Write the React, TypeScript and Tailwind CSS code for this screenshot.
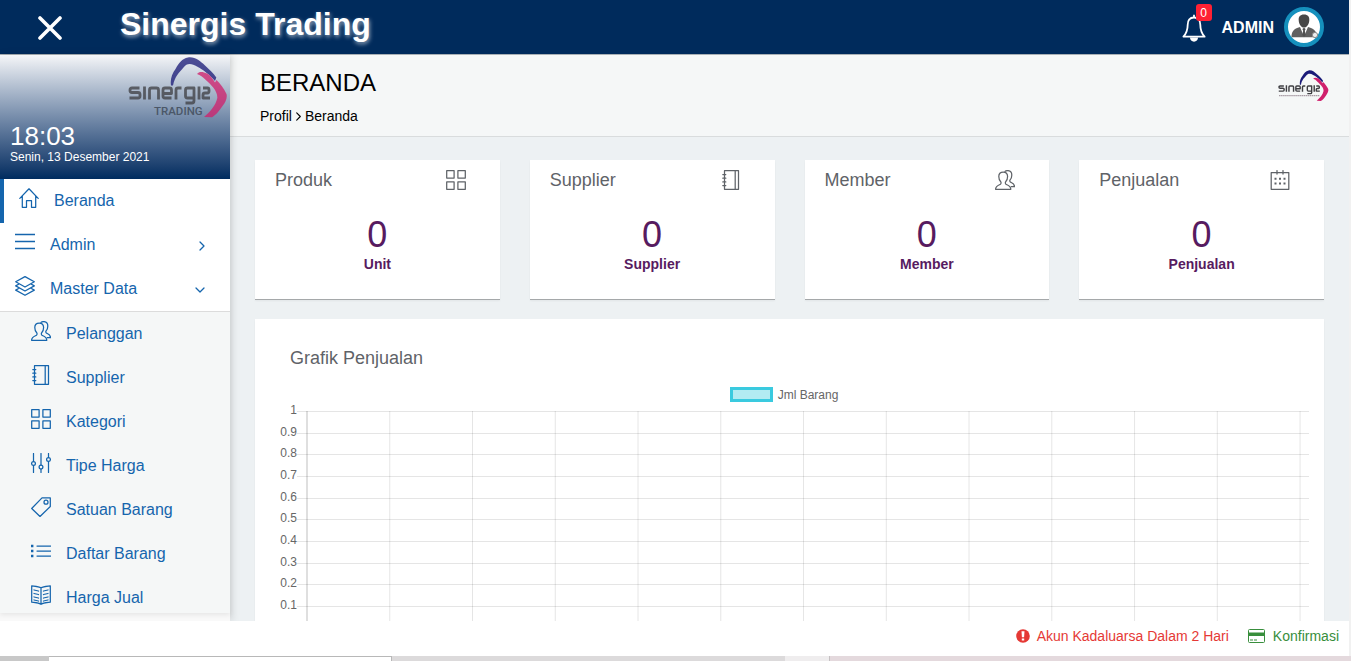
import React from "react";

type IconProps = { className?: string };

const stroke = {
  fill: "none",
  stroke: "currentColor",
  strokeWidth: 1.25,
  strokeLinejoin: "round" as const,
  strokeLinecap: "round" as const,
  viewBox: "0 0 20 20",
  "aria-hidden": true,
};

const HomeIcon = ({ className }: IconProps) => (
  <svg {...stroke} className={className}>
    <path d="M.8 10.4 10 .8l9.200 9.600M3.300 8v11.300h4.200v-6.600h5v6.600h4.200V8" />
  </svg>
);
const MenuIcon = ({ className }: IconProps) => (
  <svg {...stroke} className={className} strokeWidth={1.6}>
    <path d="M.5 2.500h19M.5 9.500h19M.5 16.500h19" />
  </svg>
);
const LayersIcon = ({ className }: IconProps) => (
  <svg {...stroke} className={className}>
    <path d="M10 .6 19.300 5.800 10 11 .7 5.800zM4 8 .7 9.900 10 15l9.300-5.100L16 8M4 12.200.7 14.100l9.300 5.200 9.300-5.200-3.300-1.900" />
  </svg>
);
const PeopleIcon = ({ className }: IconProps) => (
  <svg {...stroke} className={className}>
    <path d="M8.200 2c3 0 4.400 1.900 4.400 4.500 0 2.300-.7 4-1.900 5.200-.5.600-.5 2 .3 2.600 1 .7 4.800 1.400 4.800 5H.6c0-3.600 3.800-4.300 4.800-5 .8-.6.800-2 .3-2.600-1.200-1.200-1.900-2.900-1.900-5.200C3.800 3.900 5.200 2 8.200 2z" />
    <path d="M10 1.400C10.700.8 11.600.6 12.600.6c3 0 4.200 1.900 4.200 4.300 0 2.100-.6 3.700-1.700 4.900-.5.600-.4 1.800.4 2.300 1 .7 4 1.300 4 4.600h-3.300" />
  </svg>
);
const NotebookIcon = ({ className }: IconProps) => (
  <svg {...stroke} className={className}>
    <path d="M3.500.7h14v18.600h-14zM14.200.7v18.600M1.800 4.500h3M1.800 8.200h3M1.800 11.900h3M1.800 15.500h3" />
  </svg>
);
const GridIcon = ({ className }: IconProps) => (
  <svg {...stroke} className={className}>
    <path d="M.7.700h7.400v7.400H.7zM11.900.7h7.400v7.400h-7.400zM.7 11.900h7.400v7.400H.7zM11.900 11.900h7.400v7.400h-7.400z" />
  </svg>
);
const SlidersIcon = ({ className }: IconProps) => (
  <svg {...stroke} className={className}>
    <path d="M2.500.5v8M2.500 12.500v7M10 .5v11.700M10 16v3.500M17.500.5v4M17.500 8.500v11" />
    <circle cx="2.500" cy="10.500" r="1.900" />
    <circle cx="10" cy="14.100" r="1.900" />
    <circle cx="17.500" cy="6.500" r="1.900" />
  </svg>
);
const TagIcon = ({ className }: IconProps) => (
  <svg {...stroke} className={className}>
    <path d="M11 .9h8.300v8.600L9 19.500.7 11.500z" />
    <circle cx="15" cy="5.200" r="2" />
  </svg>
);
const ListIcon = ({ className }: IconProps) => (
  <svg {...stroke} className={className}>
    <path d="M6 5h13.500M6 10h13.500M6 15h13.500" />
    <path fill="currentColor" stroke="none" d="M0 3.800h2.400v2.400H0zM0 8.800h2.400v2.400H0zM0 13.800h2.400v2.400H0z" />
  </svg>
);
const BookIcon = ({ className }: IconProps) => (
  <svg {...stroke} className={className}>
    <path d="M10 2.800C7.500 1.200 3.800 1.200.7.800v16.400c3.100.4 6.800.4 9.300 2.100 2.500-1.700 6.200-1.700 9.300-2.100V.8c-3.100.4-6.800.4-9.300 2zM10 2.800v16.500M3 5l4.500 1M3 8.500l4.500 1M3 12l4.500 1M3 15l4.500 1M17 5l-4.500 1M17 8.500l-4.500 1M17 12l-4.500 1M17 15l-4.500 1" />
  </svg>
);
const CalendarIcon = ({ className }: IconProps) => (
  <svg {...stroke} className={className}>
    <path d="M1.200 2.600h17.600v16.700H1.200zM7 .6v3.400M13 .6v3.400" />
    <path fill="currentColor" stroke="none" d="M4.500 7.800h2v2h-2zM9 7.800h2v2H9zM13.500 7.800h2v2h-2zM4.500 12.500h2v2h-2zM9 12.500h2v2H9zM13.500 12.500h2v2h-2z" />
  </svg>
);
const Chevron = ({ className }: IconProps) => (
  <svg {...stroke} viewBox="0 0 10 10" className={className}>
    <path d="m3 1 4 4-4 4" />
  </svg>
);
const BellIcon = ({ className }: IconProps) => (
  <svg viewBox="0 0 24 28" fill="none" stroke="currentColor" strokeWidth="1.800" strokeLinejoin="round" className={className} aria-hidden="true">
    <path d="M12 3.500c-4.500 0-6.300 3.200-6.300 7.200 0 5.600-1.200 8.500-4.300 12h21.200c-3.100-3.500-4.300-6.400-4.300-12 0-4-1.800-7.200-6.300-7.200z" />
    <path d="M12 .8v2.700" />
    <path fill="currentColor" stroke="none" d="M8 23.500h8c0 2.300-1.800 4.200-4 4.200s-4-1.900-4-4.200z" />
  </svg>
);
const CloseIcon = ({ className }: IconProps) => (
  <svg viewBox="0 0 24 24" fill="none" stroke="currentColor" strokeWidth="3.600" strokeLinecap="round" className={className} aria-hidden="true">
    <path d="m2 2 20 20M22 2 2 22" />
  </svg>
);
const AlertIcon = ({ className }: IconProps) => (
  <svg viewBox="0 0 14 14" className={className} aria-hidden="true">
    <circle cx="7" cy="7" r="6.800" fill="currentColor" />
    <path fill="#fff" d="M5.500 2.300h3L8.100 8.300H5.900zM5.800 9.500h2.400v2H5.800z" />
  </svg>
);
const CardIcon = ({ className }: IconProps) => (
  <svg viewBox="0 0 17 14" className={className} aria-hidden="true">
    <rect x=".5" y=".5" width="16" height="13" rx="1" fill="#fff" stroke="currentColor" />
    <path fill="currentColor" d="M0 3.500h17v3.500H0zM2 10.500h3v1H2zM6 10.500h3v1H6z" />
  </svg>
);
const UserAvatar = ({ className }: IconProps) => (
  <svg viewBox="0 0 40 40" className={className} aria-hidden="true">
    <circle cx="20" cy="20" r="18" fill="#fff" stroke="#1590bd" strokeWidth="4" />
    <path fill="#474747" d="M20 7.500c4 0 5.500 2.300 5.300 5.700-.2 3.800-2.300 7.300-5.300 7.300s-5.100-3.500-5.300-7.300c-.2-3.400 1.300-5.700 5.300-5.700z" />
    <path fill="#606060" d="M7.500 30.300c0-6 2-8.300 8.500-10.300l4 9.500 4-9.500c6.500 2 9 4.300 9 10.300z" />
    <path fill="#505050" d="m18.400 22 1.600-1.200 1.600 1.200-.8 1.800.9 4.200-1.700 2.300-1.700-2.300.9-4.200z" />
    <circle cx="31" cy="28" r="2.600" fill="#eee" stroke="#8a8a8a" />
  </svg>
);

function Logo({ className, tagline, light }: { className?: string; tagline: boolean; light?: boolean }) {
  return (
    <svg viewBox="0 0 100 62" className={className} role="img" aria-label="Sinergis">
      <g opacity={light ? 0.76 : 1}>
        <path fill="#1b1b78" d="M43 28.500C42 22 44 17 47.500 12 51 6 54 1.500 60 .5c7-1 12 3.500 17 8C82 13 85 16 88.300 20.500L87 24C82 18 75 12.500 69 9.500c-5-3-10-4-13.500 1C51 16 47 19 45 28.500z" />
        <path fill="#d0206c" d="M69 17c2-3 6-2.500 10-.5 3 1.500 5 4 8 9l1.500-2.500c4 4 7 8 10 14 1 4-1 8-4 12-4 5.500-6 8.500-10.500 11.200L76 60c6-5 12-12 13.300-19 .5-7-6-13-12-18.500-2.500-2.500-5-4.500-8.300-5.500z" />
        <g transform="translate(0 -2.500)" fill="none" stroke="#3f3f43" strokeWidth="2.800" strokeLinejoin="round">
          <path d="M11.500 33.500H4q-2 0-2 2v.500q0 2 2 2h6q2 0 2 2v1.500q0 2-2 2H1.500M16.500 32v13M21.500 45V35.500q0-2 2-2h5q2 0 2 2V45M35 39h8.500v-3.500q0-2-2-2H37q-2 0-2 2v6q0 2 2 2h6.500M48 45v-9.500q0-2 2-2h3.500M66 43.500h-6.500q-2 0-2-2v-6q0-2 2-2H66V46q0 2.500-2 2.500h-6.500M71 32v13M75 33.500h4.500q1.500 0 1.500 2v1q0 2-1.500 2H77q-2 0-2 2v3h7" />
        </g>
      </g>
      {tagline ? (
        <text x="26" y="58" fontFamily="Roboto, sans-serif" fontSize="11.500" fontWeight="500" fill="#4b5768">TRADING</text>
      ) : (
        <path d="M2 50h80" stroke="#a89ca5" strokeWidth="2.500" strokeDasharray="3 1" />
      )}
    </svg>
  );
}

const subItems = [
  { label: "Pelanggan", Icon: PeopleIcon },
  { label: "Supplier", Icon: NotebookIcon },
  { label: "Kategori", Icon: GridIcon },
  { label: "Tipe Harga", Icon: SlidersIcon },
  { label: "Satuan Barang", Icon: TagIcon },
  { label: "Daftar Barang", Icon: ListIcon },
  { label: "Harga Jual", Icon: BookIcon },
];

const stats = [
  { title: "Produk", unit: "Unit", Icon: GridIcon },
  { title: "Supplier", unit: "Supplier", Icon: NotebookIcon },
  { title: "Member", unit: "Member", Icon: PeopleIcon },
  { title: "Penjualan", unit: "Penjualan", Icon: CalendarIcon },
];

function Sidebar() {
  return (
    <aside className="relative z-10 flex w-[230px] shrink-0 flex-col bg-[#f9f9f9] pb-2 text-[#1565ad] shadow-[2px_0_8px_rgba(0,0,0,0.12)]">
      <div className="flex min-h-0 grow flex-col overflow-hidden bg-[#f5f7f7] shadow-[0_2px_5px_rgba(0,0,0,0.08)]">
        <div className="flex h-[124px] shrink-0 flex-col bg-linear-to-b from-[#f5f6f8] to-[#002c5f] pt-[2px] text-white">
          <Logo className="mr-[2px] h-[62px] w-[100px] self-end" tagline light />
          <time className="px-[10px] text-[26px] leading-[34px]">18:03</time>
          <p className="px-[10px] text-[12px] leading-[8px]">Senin, 13 Desember 2021</p>
        </div>
        <nav className="shrink-0 text-[16px]">
          <div className="border-b border-[#dcdcdc] bg-white">
            <a href="#beranda" className="flex h-11 items-center border-l-4 border-[#1565ad] pl-[15px]">
              <HomeIcon className="mb-[6px] size-5" />
              <span className="ml-[15px]">Beranda</span>
            </a>
            <a href="#admin" className="flex h-11 items-center pr-[23px] pl-[15px]">
              <MenuIcon className="mb-[6px] size-5" />
              <span className="ml-[15px] grow">Admin</span>
              <Chevron className="mt-[2px] size-[10px]" />
            </a>
            <a href="#master" className="flex h-11 items-center pr-[25px] pl-[15px]">
              <LayersIcon className="mb-[6px] size-5" />
              <span className="ml-[15px] grow">Master Data</span>
              <Chevron className="mt-[2px] size-[10px] rotate-90" />
            </a>
          </div>
          <ul>
            {subItems.map(({ label, Icon }) => (
              <li key={label}>
                <a href="#menu" className="flex h-11 items-center pl-[31px]">
                  <Icon className="mb-[6px] size-5" />
                  <span className="ml-[15px]">{label}</span>
                </a>
              </li>
            ))}
          </ul>
        </nav>
      </div>
    </aside>
  );
}

const ticks = ["1", "0.9", "0.8", "0.7", "0.6", "0.5", "0.4", "0.3", "0.2", "0.1"];
const columns = Array.from({ length: 13 }, (_, i) => i);

function SalesChart() {
  return (
    <div className="flex h-[220px]">
      <svg className="block h-full w-[17px] shrink-0 overflow-visible" aria-hidden="true">
        {ticks.map((t, i) => (
          <text key={t} x="17" y={12 + i * 21.67} textAnchor="end" fontSize="12" fill="#666">{t}</text>
        ))}
      </svg>
      <svg className="block h-full min-w-0 grow" role="img" aria-label="Grafik Penjualan">
        <g shapeRendering="crispEdges">
          {ticks.map((t, i) => (
            <line key={t} x1="0" x2="100%" y1={Math.round(9 + i * 21.67) + 0.5} y2={Math.round(9 + i * 21.67) + 0.5} stroke="#000" strokeOpacity="0.1" />
          ))}
        </g>
        <svg x="10" width="99%" height="100%" overflow="visible">
          {columns.map((i) => (
            <line key={i} x1={`${i * 8.26}%`} x2={`${i * 8.26}%`} y1="9" y2="220" stroke="#000" strokeOpacity={i ? 0.1 : 0.25} />
          ))}
        </svg>
      </svg>
    </div>
  );
}

export default function App() {
  return (
    <div className="flex h-screen flex-col overflow-hidden bg-[#f1f1f1] font-['Liberation_Sans',Arial,sans-serif]">
      <div className="mr-[2px] flex min-h-0 grow flex-col">
        <header className="flex h-[54px] shrink-0 items-center bg-[#002b5c] pr-[25px] pl-[38px] text-white">
          <button type="button" aria-label="Tutup menu" className="mt-[2px]">
            <CloseIcon className="size-6" />
          </button>
          <h1 className="mb-[6px] ml-[58px] grow text-[32px] font-bold text-shadow-[1px_2px_4px_rgba(255,255,255,0.6)]">Sinergis Trading</h1>
          <button type="button" aria-label="Notifikasi" className="relative mt-[2px] mr-[16px]">
            <BellIcon className="h-7 w-6" />
            <span className="absolute -top-[10px] left-[14px] flex h-[17px] w-4 items-center justify-center rounded-[3px] bg-[#ff2134] text-[12px]">0</span>
          </button>
          <span className="mt-[2px] mr-[10px] text-[16px] font-bold">ADMIN</span>
          <UserAvatar className="size-10" />
        </header>

        <div className="flex min-h-0 grow border-t border-[#a9b0b5]">
          <Sidebar />
          <main className="min-w-0 grow overflow-hidden bg-[#edf1f3]">
            <div className="flex h-[82px] items-start justify-between border-b border-[#d9dcdd] bg-[#f5f7f7] pr-[20px] pl-[30px] text-black">
              <div>
                <h2 className="pt-[12px] text-[24px] leading-[32px]">BERANDA</h2>
                <nav className="mt-[7px] flex items-center text-[14px] leading-[20px]">
                  <a href="#profil">Profil</a>
                  <Chevron className="mx-[2px] size-[9px]" />
                  <span>Beranda</span>
                </nav>
              </div>
              <Logo className="mt-[15px] h-[32px] w-[51px]" tagline={false} />
            </div>

            <div className="px-[25px] pt-[23px]">
              <div className="grid grid-cols-4 gap-[30px]">
                {stats.map(({ title, unit, Icon }) => (
                  <section key={title} className="h-[140px] border-b border-[#a5a8aa] bg-white shadow-xs">
                    <div className="flex items-center justify-between pt-[8px] pr-[34px] pl-[20px] text-[#5f6368]">
                      <h3 className="text-[18px] leading-[24px]">{title}</h3>
                      <Icon className="size-5" />
                    </div>
                    <div className="pt-[24px] text-center text-[#571b60]">
                      <p className="text-[36px] leading-[38px]">0</p>
                      <p className="text-[14px] leading-[20px] font-bold">{unit}</p>
                    </div>
                  </section>
                ))}
              </div>

              <section className="mt-[19px] bg-white pt-[27px] pr-[15px] pl-[25px] shadow-xs">
                <h3 className="pl-[10px] text-[18px] leading-[24px] text-[#5f6368]">Grafik Penjualan</h3>
                <div className="mt-[17px] mr-[21px] flex items-center justify-center gap-[5px] text-[12px] leading-[14px] text-[#666]">
                  <span className="h-[15px] w-[43px] border-3 border-[#3acadf] bg-[#b2ebf2]" />
                  Jml Barang
                </div>
                <SalesChart />
              </section>
            </div>
          </main>
        </div>

        <footer className="relative z-20 flex h-[35px] shrink-0 items-center justify-end gap-[19px] bg-white pr-[10px] pb-[5px] text-[14px]">
          <a href="#akun" className="flex items-center gap-[7px] text-[#e53935]">
            <AlertIcon className="size-[14px]" />
            Akun Kadaluarsa Dalam 2 Hari
          </a>
          <a href="#konfirmasi" className="flex items-center gap-[8px] text-[#388e3c]">
            <CardIcon className="h-[14px] w-[17px]" />
            Konfirmasi
          </a>
        </footer>
      </div>
      <div className="flex h-[5px] shrink-0 bg-[#e4d9dd]">
        <div className="w-[49px] bg-[#c8c8c8]" />
        <div className="w-[343px] border-t border-r border-[#b8b8b8] bg-white" />
        <div className="w-[393px] bg-[#dcdadb]" />
        <div className="w-[45px] border-r border-[#c5c0c2] bg-[#efedee]" />
      </div>
    </div>
  );
}
